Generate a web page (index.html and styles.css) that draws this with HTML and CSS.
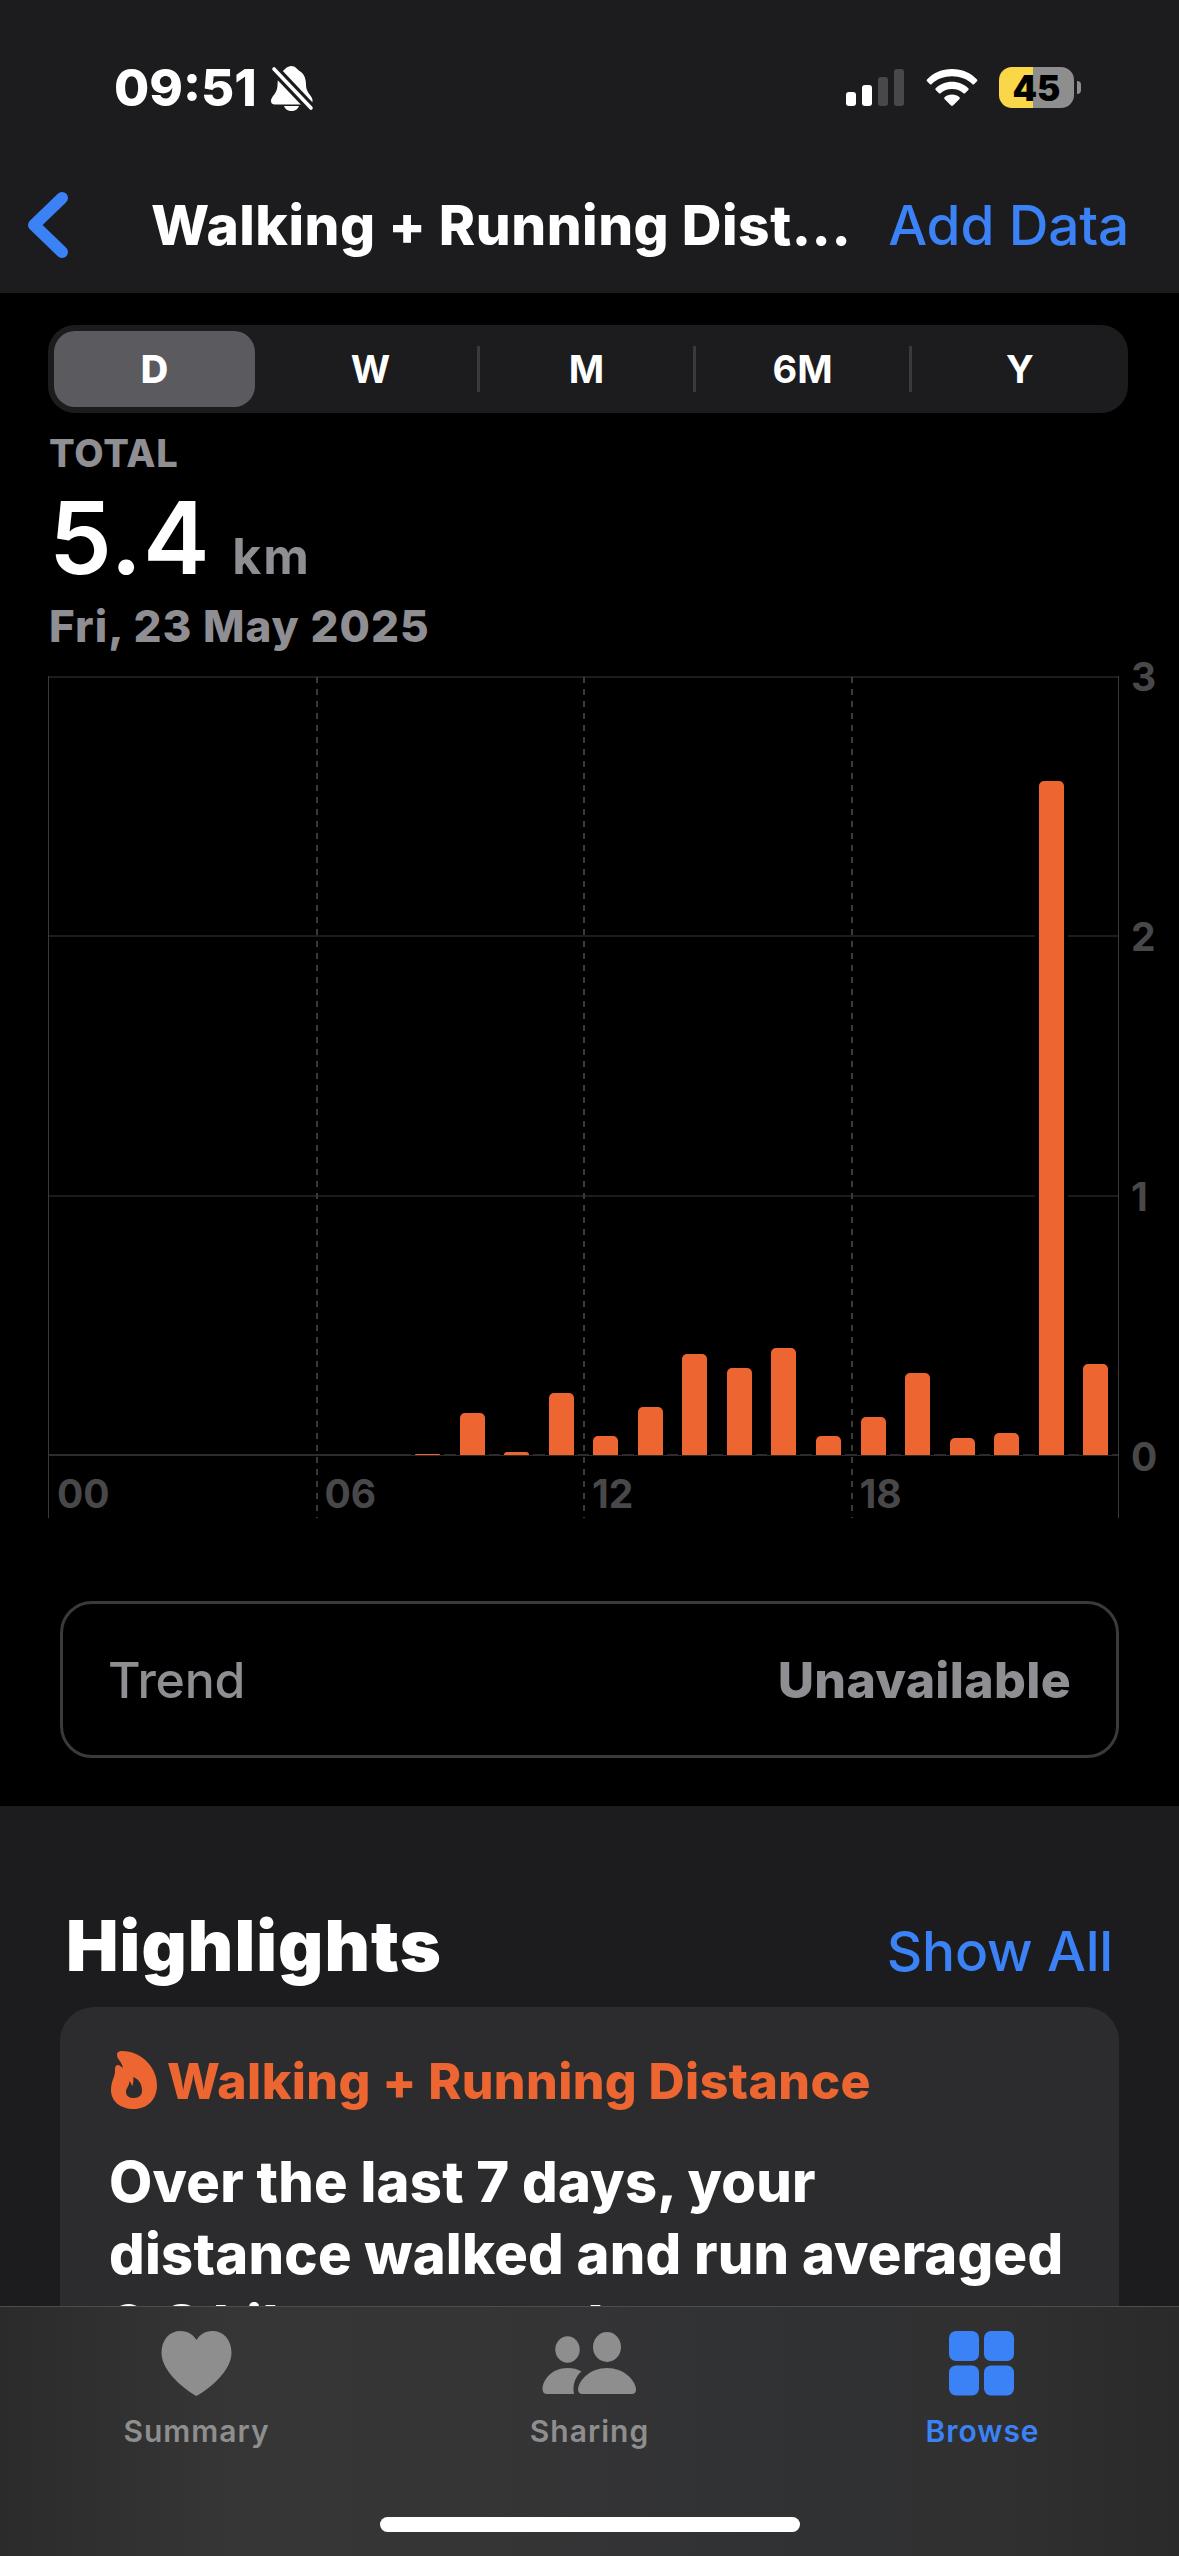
FILE: index.html
```html
<!DOCTYPE html>
<html lang="en">
<head>
  <meta charset="UTF-8">
  <title>Walking + Running Distance</title>
  <link rel="stylesheet" href="styles.css">
</head>
<body>
  <header class="header">
    <div class="status-bar">
      <span class="time">09:51</span>
      <svg class="bell" width="44" height="46" viewBox="0 0 44 46">
        <path d="M12 7 C14.500 5 15.500 2 21 1 C26 1 27 4.500 29.500 6 C35 9 36 15 36 20 C36 28 42 30 42.500 35 V36 C42.500 38.500 41 39.500 39 39.500 H5 C2 39.500 1 38 1 36 C1 31 7.500 29 7.500 20 C7.500 14 9 10 12 7 Z" fill="#fff"/>
        <path d="M14 41 H29 C28 44 25 46 21.500 46 C18 46 15 44 14 41 Z" fill="#fff"/>
        <path d="M4 4 L41 43" stroke="#1c1c1e" stroke-width="10"/>
        <path d="M4 4 L41 43" stroke="#fff" stroke-width="3.600" stroke-linecap="round"/>
      </svg>
      <div class="status-icons">
        <div class="signal"><i class="s1"></i><i class="s2"></i><i class="s3 off"></i><i class="s4 off"></i></div>
        <svg class="wifi" width="52" height="38" viewBox="0 0 52 38" fill="#fff">
          <path d="M26 0 C36 0 45 4 51 10.500 C51.500 11 51.500 11.700 51 12.200 L48 15.200 C47.500 15.700 47 15.700 46.500 15.200 C41 10 34 7.300 26 7.300 C18 7.300 11 10 5.500 15.200 C5 15.700 4.500 15.700 4 15.200 L1 12.200 C.5 11.700 .5 11 1 10.500 C7 4 16 0 26 0 Z"/>
          <path d="M26 12.800 C32.500 12.800 38 15.200 42.300 19.300 C42.800 19.800 42.800 20.500 42.300 21 L39 24.300 C38.500 24.800 38 24.800 37.500 24.300 C34.500 21.500 30.500 20 26 20 C21.500 20 17.500 21.500 14.500 24.300 C14 24.800 13.500 24.800 13 24.300 L9.700 21 C9.200 20.500 9.200 19.800 9.700 19.300 C14 15.200 19.500 12.800 26 12.800 Z"/>
          <path d="M26 25.600 C29 25.600 31.500 26.600 33.500 28.300 C34 28.800 34 29.400 33.500 29.900 L27 36.600 C26.300 37.200 25.700 37.200 25 36.600 L18.500 29.900 C18 29.400 18 28.800 18.500 28.300 C20.500 26.600 23 25.600 26 25.600 Z"/>
        </svg>
        <div class="battery"><span>45</span></div>
        <i class="battery-cap"></i>
      </div>
    </div>
    <nav class="nav">
      <svg class="back" width="42" height="68" viewBox="0 0 42 68">
        <path d="M35 7 L7 34 L35 61" fill="none" stroke="#3b82f7" stroke-width="12" stroke-linecap="round" stroke-linejoin="round"/>
      </svg>
      <h1>Walking + Running Dist...</h1>
      <a class="add">Add Data</a>
    </nav>
  </header>

  <main class="data">
    <div class="segments">
      <span class="active">D</span>
      <span>W</span>
      <span>M</span>
      <span>6M</span>
      <span>Y</span>
    </div>

    <div class="summary">
      <div class="label">TOTAL</div>
      <div class="value"><span class="number">5.4</span><span class="unit">km</span></div>
      <div class="date">Fri, 23 May 2025</div>
    </div>

    <div class="chart">
      <div class="plot">
        <div class="rows"><i></i><i></i><i></i></div>
        <div class="bars" id="bars"></div>
        <div class="hours"><span>00</span><span>06</span><span>12</span><span>18</span></div>
      </div>
      <div class="scale"><span>3</span><span>2</span><span>1</span><span>0</span></div>
    </div>

    <div class="trend">
      <span class="trend-name">Trend</span>
      <span class="trend-value">Unavailable</span>
    </div>
  </main>

  <section class="highlights">
    <div class="highlights-head">
      <h2>Highlights</h2>
      <a class="show">Show All</a>
    </div>
    <div class="card">
      <div class="card-title">
        <svg width="48" height="60" viewBox="0 0 48 60">
          <path fill="#ed6530" fill-rule="evenodd" d="M13 0 C32 0 48 16 48 34 C48 49 38 58 25 58 C11 58 2 50 2 39 C2 30 6 26 6 20 C6 17 6 14 9 14 C11 14 12 16 14 17 C13 11 8 8 8 4 C8 1 10 0 13 0 Z M24 26 C25 29 24 32 23.500 35 C22 33 22 32 20.500 30 C20.500 35 17 37 17 41 C17 45 20.500 47 25 47 C30 47 33 44 33 40 C33 33 30 28 24 26 Z"/>
        </svg>
        <span>Walking + Running Distance</span>
      </div>
      <p>Over the last 7 days, your<br>distance walked and run averaged<br>6.8 kilometres a day.</p>
    </div>
  </section>

  <footer class="tabs">
    <a class="tab">
      <svg width="96" height="68" viewBox="0 0 96 68">
        <path fill="#8e8e8e" d="M47.500 66 C45 65 12.500 45 12.500 23 C12.500 9 21 1 31.500 1 C39.500 1 44.500 5 47.500 10 C50.500 5 55.500 1 63.500 1 C74 1 82.500 9 82.500 23 C82.500 45 50 65 47.500 66 Z"/>
      </svg>
      <span>Summary</span>
    </a>
    <a class="tab">
      <svg width="96" height="68" viewBox="0 0 96 68" fill="#8e8e8e">
        <ellipse cx="25.500" cy="19.500" rx="12.200" ry="13.200"/>
        <ellipse cx="65" cy="17" rx="14" ry="15"/>
        <path d="M25.500 38 C31 38 35.500 39 39.500 41.500 C34 46 30 54 32 64 H5 C2 64 .5 62 .5 59 C1 49 10.500 38 25.500 38 Z"/>
        <path d="M65 38 C82 38 93 50 94 59 C94 62 93 64 89 64 H41 C37.500 64 36 62 36 59 C37 50 48 38 65 38 Z"/>
      </svg>
      <span>Sharing</span>
    </a>
    <a class="tab current">
      <svg width="96" height="68" viewBox="0 0 96 68" fill="#3b82f7">
        <rect x="14" y="1" width="30" height="30" rx="7"/>
        <rect x="49" y="1" width="30" height="30" rx="7"/>
        <rect x="14" y="35.500" width="30" height="30" rx="7"/>
        <rect x="49" y="35.500" width="30" height="30" rx="7"/>
      </svg>
      <span>Browse</span>
    </a>
    <div class="home"></div>
  </footer>

  <script>
    // distance per hour, in km
    const hours = [0, 0, 0, 0, 0, 0, 0, 0, 0.004, 0.163, 0.012, 0.24, 0.074, 0.186, 0.39, 0.337,
      0.413, 0.074, 0.148, 0.318, 0.067, 0.083, 2.6, 0.352];
    const max = 3;
    const bars = document.getElementById('bars');
    hours.forEach(km => {
      const slot = document.createElement('i');
      if (km > 0) slot.innerHTML = `<b style="height: ${(km / max * 100).toFixed(2)}%"></b>`;
      bars.appendChild(slot);
    });
  </script>
</body>
</html>
```
FILE: styles.css
```css
* { box-sizing: border-box; margin: 0; padding: 0; }
body {
  position: relative;
  width: 1179px;
  height: 2556px;
  overflow: hidden;
  background: #1c1c1e;
  color: #fff;
  font-family: Inter, "Liberation Sans", sans-serif;
}
i { display: block; }

.header { height: 293px; }
.status-bar {
  display: flex;
  align-items: center;
  height: 175px;
  padding: 0 98px 0 114px;
}
.time { font-size: 51px; font-weight: 800; width: 156px; }
.status-icons { display: flex; align-items: center; margin-left: auto; }
.signal { display: flex; align-items: flex-end; gap: 6px; height: 37px; margin-right: 22px; }
.signal i { width: 10px; border-radius: 3px; background: #fff; }
.signal .off { background: #48484a; }
.signal .s1 { height: 14px; }
.signal .s2 { height: 21px; }
.signal .s3 { height: 29px; }
.signal .s4 { height: 37px; }
.wifi { margin-right: 21px; }
.battery {
  width: 75px;
  height: 41px;
  border-radius: 13px;
  background: linear-gradient(to right, #f9d749 45%, #8e8e8e 45%);
  color: #000;
  font-size: 35px;
  font-weight: 900;
  line-height: 42px;
  text-align: center;
}
.battery-cap { width: 4px; height: 13px; margin-left: 3px; border-radius: 0 6px 6px 0; background: #8e8e8e; }

.nav {
  display: flex;
  align-items: center;
  height: 100px;
  padding: 0 50px 0 27px;
}
.nav h1 { margin-left: 82px; font-size: 55px; font-weight: 800; letter-spacing: 0.5px; white-space: nowrap; }
.add, .show { color: #3b82f7; font-size: 55px; font-weight: 500; letter-spacing: -0.2px; white-space: nowrap; }
.add { margin-left: auto; }

.data { height: 1513px; padding: 32px 0 0 48px; background: #000; }
.segments {
  display: grid;
  grid-template-columns: repeat(5, 1fr);
  align-items: center;
  width: 1080px;
  height: 88px;
  border-radius: 27px;
  background: #1c1c1e;
  font-size: 38px;
  font-weight: 700;
  text-align: center;
}
.segments span { height: 46px; line-height: 46px; margin-left: -3px; padding-right: 3px; border-left: 3px solid #3a3a3c; }
.segments .active {
  height: 76px;
  margin: 0 9px 0 6px;
  padding: 0;
  border: 0;
  border-radius: 21px;
  background: #5b5a5f;
  line-height: 76px;
  font-weight: 800;
}
.segments .active + span { border-color: transparent; }
.segments span:last-child { padding-right: 0; }

.summary { padding-left: 1px; }
.label { color: #8e8e93; font-size: 38px; font-weight: 800; line-height: 80px; letter-spacing: 0.8px; }
.value { display: flex; align-items: baseline; height: 90px; line-height: 90px; }
.number { font-size: 100px; font-weight: 600; letter-spacing: 0.8px; }
.unit { margin-left: 22px; color: #8e8e93; font-size: 50px; font-weight: 700; letter-spacing: 2px; }
.date { color: #8e8e93; font-size: 44px; font-weight: 800; line-height: 86px; letter-spacing: 1px; }

.chart { display: flex; margin-top: 7px; height: 842px; color: #48484a; font-size: 39px; font-weight: 700; }
.plot {
  position: relative;
  width: 1071px;
  border: 1px solid #3a3a3c;
  border-width: 0 1px;
}
.rows {
  position: absolute;
  inset: 0 0 auto 0;
  display: grid;
  grid-template-rows: repeat(3, 1fr);
  height: 780px;
  border-bottom: 2px solid #2c2c2e;
}
.rows i { border-top: 2px solid #1c1c1e; }
.bars {
  position: relative;
  display: grid;
  grid-template-columns: repeat(24, 1fr);
  height: 779px;
  padding-top: 1px;
  overflow: hidden;
}
.bars i { display: flex; align-items: flex-end; justify-content: center; }
.bars b { width: 25px; border-radius: 5px 5px 0 0; background: #ed6530; box-shadow: 0 0 0 4px #000; }
.hours {
  position: absolute;
  inset: 0 0 0 -1px;
  display: grid;
  grid-template-columns: repeat(4, 1fr);
  align-items: end;
  line-height: 48px;
}
.hours span { height: 100%; padding: 794px 0 0 9px; }
.hours span + span {
  background: repeating-linear-gradient(to bottom, #3a3a3c 0 6px, transparent 6px 12px) 0 1px / 2px 100% no-repeat;
}
.scale {
  display: flex;
  flex-direction: column;
  justify-content: space-between;
  height: 820px;
  margin: -19px 0 0 12px;
  line-height: 40px;
}

.trend {
  display: flex;
  align-items: center;
  justify-content: space-between;
  width: 1059px;
  height: 157px;
  margin: 83px 0 0 12px;
  padding: 0 45px;
  border: 3px solid #3a3a3c;
  border-radius: 32px;
  color: #8e8e93;
  font-size: 50px;
  font-weight: 500;
}
.trend-name { letter-spacing: -0.3px; }
.trend-value { font-weight: 800; letter-spacing: 0.3px; }

.highlights { padding: 90px 60px 0; }
.highlights-head {
  display: flex;
  align-items: baseline;
  justify-content: space-between;
  height: 111px;
  padding: 0 6px;
  line-height: 99px;
}
.highlights-head h2 { font-size: 70px; font-weight: 900; letter-spacing: 1.1px; }
.card { height: 600px; padding: 44px 49px 0; border-radius: 34px; background: #2c2c2e; }
.card-title { display: flex; align-items: center; gap: 10px; height: 60px; color: #ed6530; font-size: 50px; font-weight: 800; letter-spacing: 0.4px; white-space: nowrap; }
.card p { margin-top: 35px; font-size: 56px; font-weight: 800; line-height: 72px; letter-spacing: 0.25px; white-space: nowrap; }

.tabs {
  position: absolute;
  inset: 2306px 0 0 0;
  display: grid;
  grid-template-columns: repeat(3, 1fr);
  border-top: 1px solid #4c4c4e;
  background: linear-gradient(to right, #2b2b2b, #363637 20%, #353536 40%, #303133 70%, #303030 85%, #2a2a2a);
}
.tab {
  display: flex;
  flex-direction: column;
  align-items: center;
  padding-top: 23px;
  color: #8e8e8e;
  font-size: 30px;
  font-weight: 600;
}
.tab span { margin-top: 13px; line-height: 40px; letter-spacing: 1px; }
.tab.current { color: #3b82f7; }
.home {
  position: absolute;
  left: 380px;
  bottom: 24px;
  width: 420px;
  height: 15px;
  border-radius: 8px;
  background: #fff;
}
```
